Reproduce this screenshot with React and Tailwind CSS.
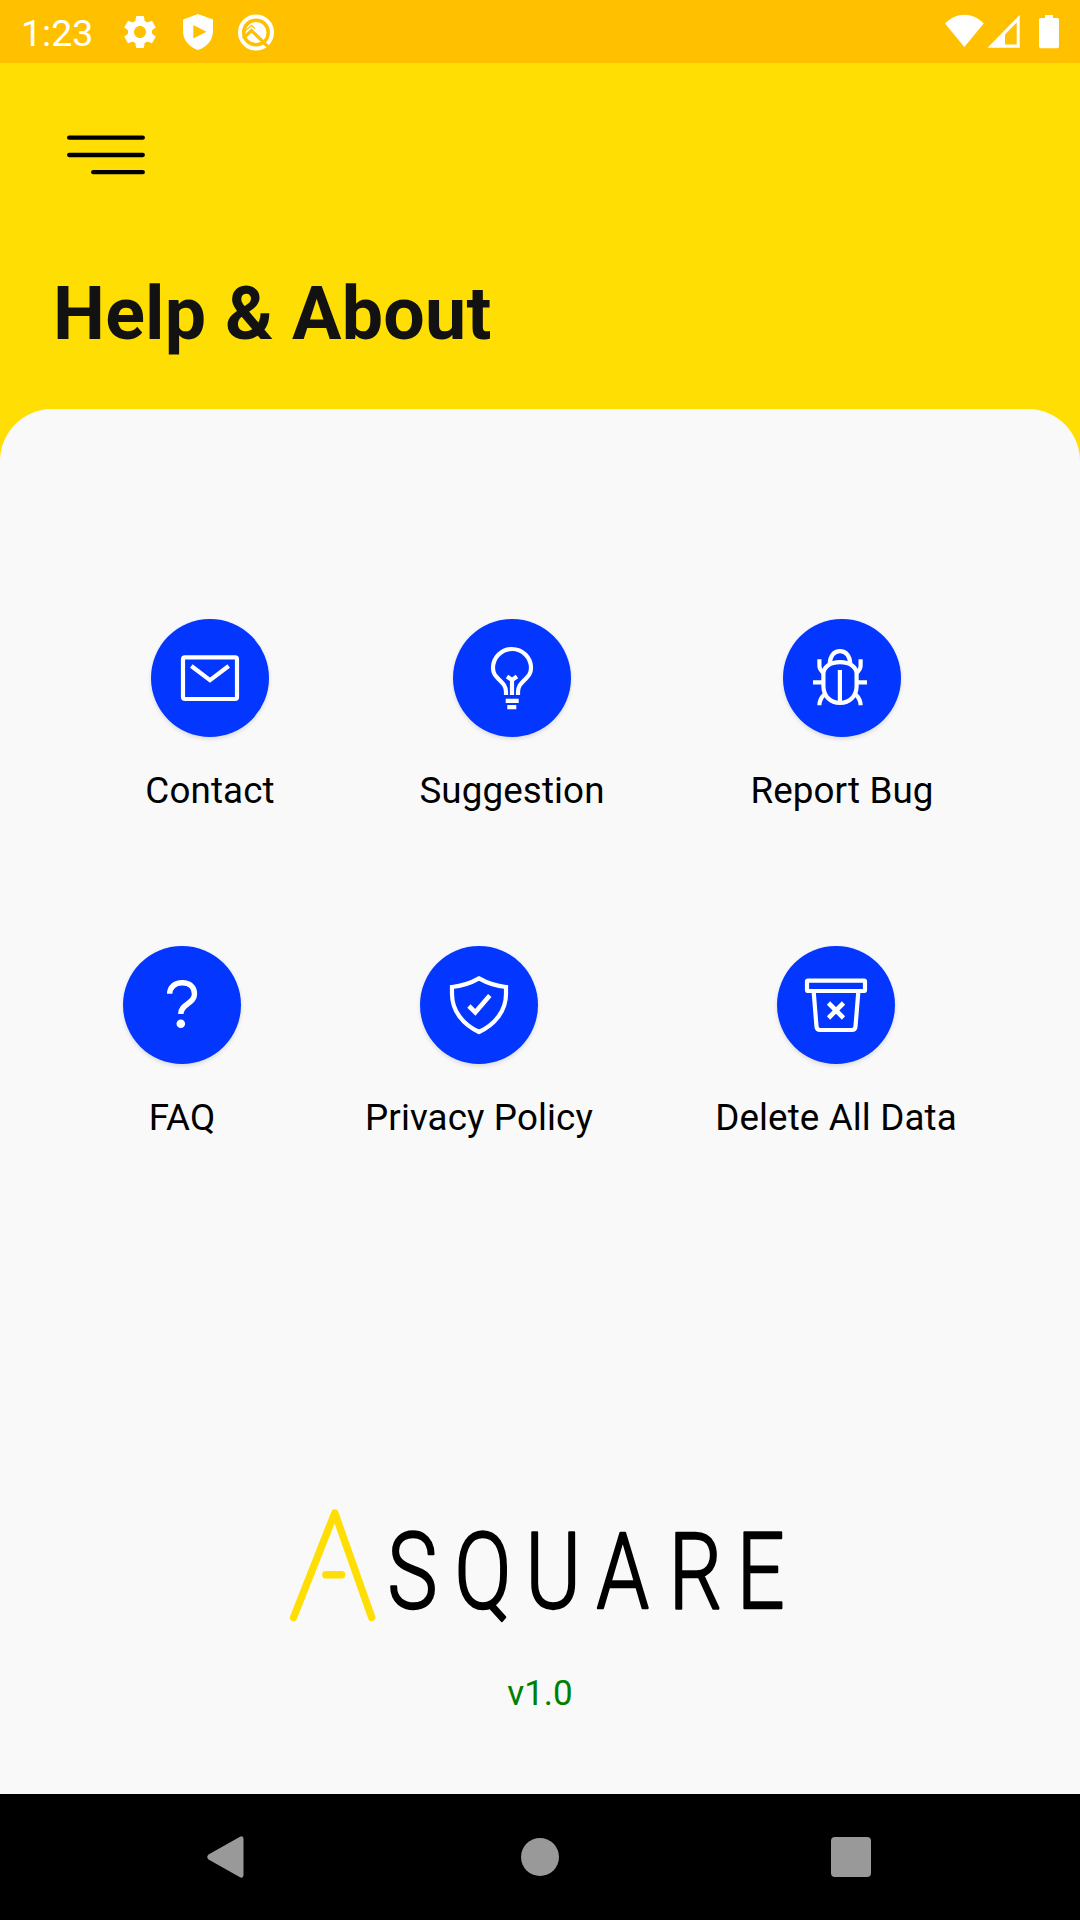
import { MdSettings } from "react-icons/md";

function Icon({ children }) {
  return (
    <svg viewBox="0 0 118 118" className="size-[118px]" fill="none" stroke="#fff" strokeWidth="4.2">
      {children}
    </svg>
  );
}

const icons = {
  mail: (
    <Icon>
      <rect x="32" y="38.4" width="54" height="41.6" rx="2" />
      <path d="M40.3 47 59 61.2 77.7 47" />
    </Icon>
  ),
  bulb: (
    <Icon>
      <path d="M53 76v-3c0-6-3-8.5-6.5-12C43 57.500 40 55 40 49a19 19 0 0 1 38 0c0 6-3 8.500-6.500 12-3.500 3.500-6.500 6-6.500 12v3" />
      <path d="M59 76V60M54 57.500 59 61l5-3.500" />
      <path d="M52.700 81.800h13M54.300 88.100h9" />
    </Icon>
  ),
  bug: (
    <Icon>
      <path d="M57 43.200C67 43.200 73.600 48 73.600 55v12c0 10-7 17-16.600 17s-16.600-7-16.600-17V55C40.400 48 47 43.200 57 43.200Z" />
      <path d="M46.800 45C46.800 37 51 32.200 57 32.200S67.200 37 67.200 45" />
      <path d="M56.900 51v33M30 63.300h10M74 63.300h10" />
      <path d="M36.400 40.300v6.500c0 3 2 5.500 4.500 7.500M77.600 40.300v6.500c0 3-2 5.500-4.500 7.500" />
      <path d="M36.400 86.300c0-5 2-8 5.200-11M77.600 86.300c0-5-2-8-5.200-11" />
    </Icon>
  ),
  question: (
    <Icon>
      <path strokeWidth="5.400" d="M46.700 47.800c0-6.500 5-11 12.500-11s12.300 4.300 12.300 11.200c0 10-13.700 9.500-13.700 20" />
      <circle cx="57.800" cy="77.800" r="4.300" fill="#fff" stroke="none" />
    </Icon>
  ),
  shield: (
    <Icon>
      <path d="M59 32.400C50 37.500 42 40 32 41v7c0 17 11 30.500 27 38 16-7.500 27-21 27-38v-7c-10-1-18-3.500-27-8.600Z" />
      <path strokeWidth="4.600" d="m48.900 60 6.400 6.300L69.800 49.500" />
    </Icon>
  ),
  bin: (
    <Icon>
      <rect x="30" y="34.600" width="58" height="10.400" rx="1" />
      <path d="M36.700 46 39.500 80.500Q39.800 84 43.200 84h31.600q3.400 0 3.700-3.500L81.300 46" />
      <path strokeWidth="4.600" d="m51.500 57 15 15m0-15-15 15" />
    </Icon>
  ),
};

function Action({ icon, label, width }) {
  return (
    <div className={`flex flex-col items-center ${width}`}>
      <button className="size-[118px] rounded-full bg-[#0336ff] shadow-[0_2px_4px_rgba(0,0,0,0.13)]">
        {icons[icon]}
      </button>
      <span className="mt-[32px] whitespace-nowrap text-[36.75px] leading-[43px] tracking-[0.12px] text-black">
        {label}
      </span>
    </div>
  );
}

function StatusBar() {
  return (
    <div className="flex h-[63px] items-center bg-[#ffc000] text-white">
      <span className="ml-[21px] w-[99px] pt-[2px] text-[37.5px] leading-[62px]">1:23</span>
      <MdSettings className="size-[40px] shrink-0" />
      <svg viewBox="0 0 30 36" className="ml-[23px] h-[36px] w-[30px]" fill="#fff">
        <path fillRule="evenodd" d="M15 0 30 5.500V17c0 9-6 16-15 19C6 33 0 26 0 17V5.500ZM10.300 11v13.500L23.500 17.800Z" />
      </svg>
      <svg viewBox="0 0 38 38" className="ml-[24px] size-[38px]" fill="none">
        <circle cx="19" cy="19.500" r="16" stroke="#fff" strokeWidth="4" />
        <circle cx="19" cy="19.500" r="10.500" fill="#fff" />
        <path d="M6 25.500 14.500 17.500 34 36.500" stroke="#ffc000" strokeWidth="3.200" />
        <path d="M8.500 17.500 14.500 12.500 18 15.500" stroke="#ffc000" strokeWidth="1.300" />
      </svg>
      <svg viewBox="0 0 120 36" className="ml-auto mr-[18px] h-[36px] w-[120px]" fill="#fff">
        <path d="M3 9.500C14-2.300 31-2.300 41.700 9.500L22.300 33Z" />
        <path fillRule="evenodd" d="M45.500 33.700 77.700 1V33.700ZM63 20.500V30.500H74.700V8.500Z" />
        <path d="M103 1h8v3h4.500Q117 4 117 5.500v27Q117 34.300 115.300 34.300h-16.500Q97 34.300 97 32.500v-27Q97 4 98.500 4H103Z" />
      </svg>
    </div>
  );
}

function Logo() {
  return (
    <svg viewBox="0 0 520 150" className="h-[150px] w-[520px]" role="img" aria-label="Asquare">
      <g fill="none" stroke="#ffde03" strokeWidth="7.400" strokeLinecap="round" strokeLinejoin="round">
        <path d="M13.500 127.500 54.800 23 91.700 127.500M45.800 84.700H61.600" />
      </g>
      <text
        transform="scale(0.8 1)"
        x="134.500 218 307 395.500 486 571"
        y="118.500"
        fontSize="105"
        fontWeight="300"
        stroke="#000"
        strokeWidth="2.400"
        strokeLinejoin="round"
      >
        SQUARE
      </text>
    </svg>
  );
}

export default function App() {
  return (
    <div className="flex h-[1920px] w-[1080px] flex-col bg-[#ffde03] font-[Roboto,sans-serif]">
      <StatusBar />
      <header className="flex h-[346px] flex-col">
        <svg viewBox="0 0 78 40" className="ml-[67px] mt-[72px] h-[40px] w-[78px]" stroke="#000" strokeWidth="4.300" strokeLinecap="round">
          <path d="M2.200 2.700H75.800M2.200 20H75.800M26.200 37.200H75.800" />
        </svg>
        <h1 className="ml-[53px] mt-[96px] text-[73.5px] font-bold leading-[86px] tracking-[0.25px] text-[#121212]">
          Help &amp; About
        </h1>
      </header>
      <main className="flex flex-1 flex-col rounded-t-[52px] bg-[#f9f9f9]">
        <div className="mt-[210px] flex pl-[84px]">
          <Action icon="mail" label="Contact" width="w-[252px]" />
          <Action icon="bulb" label="Suggestion" width="w-[352px]" />
          <Action icon="bug" label="Report Bug" width="w-[308px]" />
        </div>
        <div className="mt-[134px] flex pl-[64px]">
          <Action icon="question" label="FAQ" width="w-[236px]" />
          <Action icon="shield" label="Privacy Policy" width="w-[358px]" />
          <Action icon="bin" label="Delete All Data" width="w-[356px]" />
        </div>
        <div className="mt-auto flex flex-col items-center pb-[79px]">
          <Logo />
          <span className="mt-[33px] text-[35px] leading-[42px] text-[#008000]">v1.0</span>
        </div>
      </main>
      <nav className="flex h-[126px] items-center bg-black pl-[207px]">
        <svg viewBox="0 0 37 42" className="h-[42px] w-[37px]" fill="#999">
          <path d="M1.500 18.500 33 .7Q36.500-.7 36.500 3V39Q36.500 42.700 33 41.300L1.500 23.500Q-1 21 1.500 18.500Z" />
        </svg>
        <div className="ml-[277px] size-[38px] rounded-full bg-[#999]" />
        <div className="ml-[272px] size-[40px] rounded-[4px] bg-[#999]" />
      </nav>
    </div>
  );
}
